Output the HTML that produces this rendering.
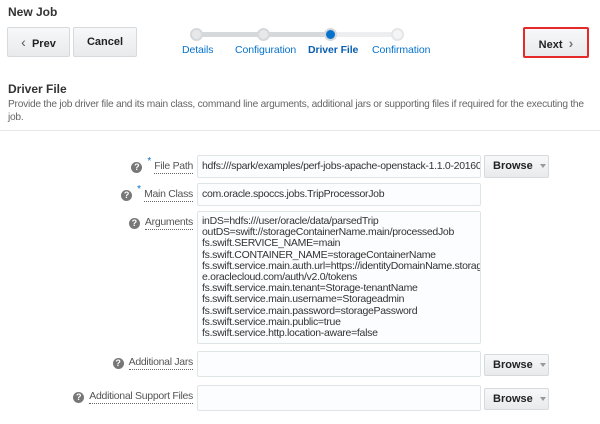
<!DOCTYPE html>
<html><head><style>
body{margin:0;width:600px;height:424px;background:#fff;font-family:"Liberation Sans",Arial,sans-serif;position:relative;overflow:hidden;color:#333}
.a{position:absolute}
.btn{position:absolute;background:linear-gradient(#f7f8f9,#e8eaec);border:1px solid #d6dadd;border-radius:2px;font-weight:bold;font-size:11px;color:#222;text-align:center;box-sizing:border-box;white-space:nowrap}
.inp{position:absolute;left:197px;width:284px;background:#fcfdfe;border:1px solid #dfe4e7;border-radius:2px;box-sizing:border-box;font-size:10.5px;letter-spacing:-0.3px;color:#333;padding-left:4px;white-space:nowrap;overflow:hidden}
.row{position:absolute;right:407px;display:flex;align-items:flex-start;white-space:nowrap}
.lbl{font-size:10.5px;letter-spacing:-0.3px;color:#555;border-bottom:1px dotted #666;line-height:13px}
.q{width:11px;height:11px;border-radius:50%;background:#777;color:#fff;font-size:9px;font-weight:bold;text-align:center;line-height:11px;margin-top:2px;margin-right:5px}
.star{color:#0572ce;font-size:10px;margin-right:3px;margin-top:-4px}
.dot{position:absolute;width:13px;height:13px;border-radius:50%;box-sizing:border-box;top:28px}
.tl{position:absolute;top:44px;font-size:10.5px;letter-spacing:-0.1px;color:#0572ce;white-space:nowrap}
.car{display:inline-block;width:0;height:0;border-left:3.5px solid transparent;border-right:3.5px solid transparent;border-top:4px solid #999;margin-left:7px;vertical-align:middle}
</style></head><body>
<div class="a" style="left:8px;top:5px;font-weight:bold;font-size:12px;color:#333">New Job</div>
<div class="btn" style="left:7px;top:27px;width:63px;height:30px;line-height:28px"><span style="color:#555;font-weight:normal;font-size:14px">&#8249;</span>&nbsp; Prev</div>
<div class="btn" style="left:73px;top:27px;width:64px;height:30px;line-height:28px">Cancel</div>
<div class="a" style="left:196px;top:32px;width:135px;height:5px;background:#d6d9db"></div>
<div class="a" style="left:331px;top:32px;width:68px;height:5px;background:#eceeef"></div>
<div class="dot" style="left:190px;background:#d6d9db;border:2px solid #d6d9db"><div style="width:9px;height:9px;border-radius:50%;background:#e6e8ea"></div></div>
<div class="dot" style="left:257px;background:#d6d9db;border:2px solid #d6d9db"><div style="width:9px;height:9px;border-radius:50%;background:#e6e8ea"></div></div>
<div class="dot" style="left:324px;background:#0572ce;border:2px solid #d6d9db"></div>
<div class="dot" style="left:391px;background:#f4f5f6;border:2px solid #e4e6e8"></div>
<div class="tl" style="left:182px">Details</div>
<div class="tl" style="left:235px">Configuration</div>
<div class="tl" style="left:308px;font-weight:bold;color:#0a5fb0">Driver File</div>
<div class="tl" style="left:372px">Confirmation</div>
<div class="btn" style="left:523px;top:27px;width:66px;height:31px;line-height:29px;border:2px solid #e52a2a">Next&nbsp; <span style="color:#777;font-size:14px">&#8250;</span></div>
<div class="a" style="left:8px;top:82px;font-weight:bold;font-size:12px">Driver File</div>
<div class="a" style="left:8px;top:98px;white-space:nowrap;font-size:10.2px;letter-spacing:-0.25px;color:#666;line-height:13px">Provide the job driver file and its main class, command line arguments, additional jars or supporting files if required for the executing the<br>job.</div>
<div class="a" style="left:0;top:130px;width:600px;height:1px;background:#e5e8ea"></div>

<div class="row" style="top:160px"><div class="q">?</div><div class="star">*</div><div class="lbl">File Path</div></div>
<div class="inp" style="top:155px;height:23px;line-height:21px">hdfs:///spark/examples/perf-jobs-apache-openstack-1.1.0-20160</div>
<div class="btn" style="left:484px;top:155px;width:65px;height:23px;line-height:21px;text-align:left;padding-left:8px">Browse<span class="car"></span></div>

<div class="row" style="top:188px"><div class="q">?</div><div class="star">*</div><div class="lbl">Main Class</div></div>
<div class="inp" style="top:183px;height:23px;line-height:21px">com.oracle.spoccs.jobs.TripProcessorJob</div>

<div class="row" style="top:216px"><div class="q">?</div><div class="lbl">Arguments</div></div>
<div class="inp" style="top:211px;height:133px;line-height:11.2px;padding-top:4px">inDS=hdfs:///user/oracle/data/parsedTrip<br>outDS=swift://storageContainerName.main/processedJob<br>fs.swift.SERVICE_NAME=main<br>fs.swift.CONTAINER_NAME=storageContainerName<br>fs.swift.service.main.auth.url=https://identityDomainName.storag<br>e.oraclecloud.com/auth/v2.0/tokens<br>fs.swift.service.main.tenant=Storage-tenantName<br>fs.swift.service.main.username=Storageadmin<br>fs.swift.service.main.password=storagePassword<br>fs.swift.service.main.public=true<br>fs.swift.service.http.location-aware=false</div>

<div class="row" style="top:356px"><div class="q">?</div><div class="lbl">Additional Jars</div></div>
<div class="inp" style="top:351px;height:26px"></div>
<div class="btn" style="left:484px;top:354px;width:65px;height:22px;line-height:20px;text-align:left;padding-left:8px">Browse<span class="car"></span></div>

<div class="row" style="top:390px"><div class="q">?</div><div class="lbl">Additional Support Files</div></div>
<div class="inp" style="top:385px;height:26px"></div>
<div class="btn" style="left:484px;top:388px;width:65px;height:22px;line-height:20px;text-align:left;padding-left:8px">Browse<span class="car"></span></div>
</body></html>
